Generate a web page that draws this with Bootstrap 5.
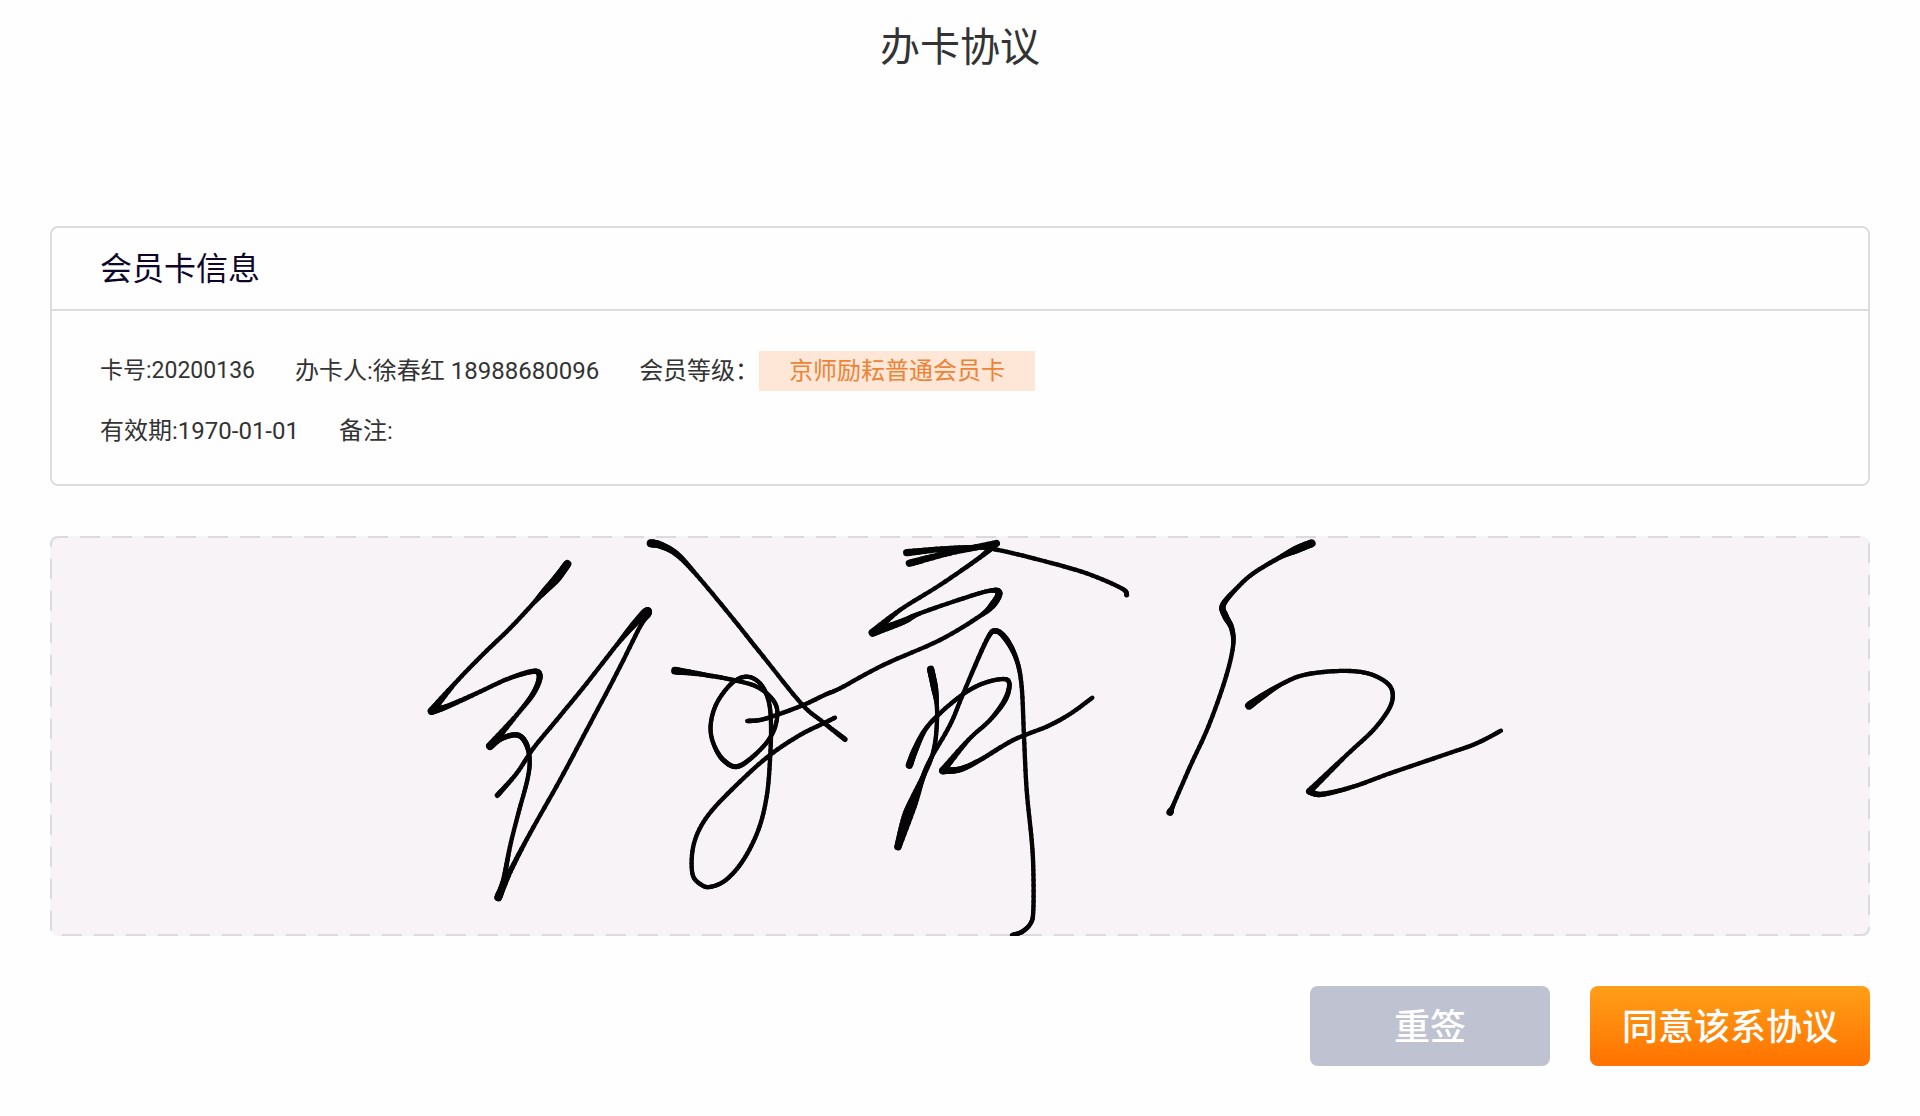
<!DOCTYPE html>
<html lang="zh-CN">
<head>
<meta charset="utf-8">
<meta name="viewport" content="width=device-width, initial-scale=1">
<title>办卡协议</title>
<link href="https://cdn.jsdelivr.net/npm/bootstrap@5.3.0/dist/css/bootstrap.min.css" rel="stylesheet">
<style>
  body { background: #fefefe; color: #333; font-family: Roboto, "Noto Sans CJK SC", sans-serif; font-size: 24px; line-height: 40px; }
  .page-title { font-size: 40px; line-height: 96px; margin-bottom: 130px; }
  .agreement { padding: 0 50px; }
  .info-card { border: 2px solid #ddd; border-radius: 8px; background: #fefefe; color: #333; margin-bottom: 50px; }
  .info-card .card-header { background: none; border-bottom: 2px solid #ddd; padding: 1px 48px 0; }
  .info-card h2 { color: #0d0628; font-size: 32px; line-height: 80px; }
  .info-card .card-body { padding: 40px 48px 33px; }
  .info-line { column-gap: 40px; margin-bottom: 20px; }
  .info-line:last-child { margin-bottom: 0; }
  .card-no { font-size: 23px; }
  .level-tag { background: #fee7d6; color: #ed8336; padding: 0 30px; }
  .sign-pad { height: 400px; margin-bottom: 50px; background: #f7f3f7; border-radius: 8px; }
  .sign-pad svg { width: 100%; height: 100%; display: block; }
  .pad-edge { width: calc(100% - 2px); height: calc(100% - 2px); }
  .sign-actions { gap: 40px; }
  .sign-btn { height: 80px; border: 0; border-radius: 8px; color: #fff; font-size: 36px; font-weight: 500; padding: 4px 0 0; }
  .btn-redo { width: 240px; background: #bfc2d0; }
  .btn-agree { width: 280px; background: linear-gradient(#ff9f18, #ff7200); }
  .btn-redo:hover { background: #b0b4c4; color: #fff; }
  .btn-agree:hover { background: #ff7200; color: #fff; }
</style>
</head>
<body>
<header><h1 class="page-title text-center fw-normal">办卡协议</h1></header>
<main class="agreement">
  <section class="card info-card">
    <div class="card-header"><h2 class="fw-normal m-0">会员卡信息</h2></div>
    <div class="card-body">
      <div class="info-line d-flex flex-wrap">
        <span class="card-no">卡号:20200136</span>
        <span>办卡人:徐春红 18988680096</span>
        <span class="d-flex"><span>会员等级：</span><span class="level-tag">京师励耘普通会员卡</span></span>
      </div>
      <div class="info-line d-flex flex-wrap">
        <span>有效期:1970-01-01</span>
        <span>备注:</span>
      </div>
    </div>
  </section>

  <section class="sign-pad" aria-label="签名">
    <svg role="img" aria-label="手写签名">
      <rect class="pad-edge" x="1" y="1" rx="7" ry="7" fill="none" stroke="#dddadd" stroke-width="2" stroke-dasharray="20 12" stroke-dashoffset="10"/>
      <svg viewBox="0 0 1820 400" width="100%" height="100%"><g id="ink" stroke="#050505" stroke-linecap="round"></g></svg>
    </svg>
  </section>

  <div class="sign-actions d-flex flex-wrap justify-content-end">
    <button type="button" class="btn sign-btn btn-redo">重签</button>
    <button type="button" class="btn sign-btn btn-agree">同意该系协议</button>
  </div>
</main>
<script src="https://cdn.jsdelivr.net/npm/bootstrap@5.3.0/dist/js/bootstrap.bundle.min.js"></script>
<script>
// Pen samples: x, y, width in thirds of a pixel, relative to the origin of each stroke.
// A sample given twice is a sharp corner.
const strokes = [
  {o:[360,-6], p:[472,102,24, 440,145,26, 405,182,20, 370,220,13, 300,295,13, 220,372,13, 135,460,13, 65,543,24, 65,543,24, 110,530,16, 200,490,13, 290,448,13, 370,424,16, 389,440,18, 370,490,16, 320,555,13, 240,648,24, 240,648,24, 275,625,16, 322,615,16, 348,640,16, 359,690,13, 352,750,13, 325,850,13, 300,950,13, 281,1050,16, 265,1102,24, 265,1102,24, 300,1025,16, 360,910,13, 450,750,13, 530,600,13, 620,430,13, 690,290,13, 714,250,22, 706,246,22, 670,285,20, 620,345,13, 530,460,13, 440,570,13, 370,655,13, 320,730,13, 262,796,16]},
  {o:[360,-6], p:[722,40,24, 750,45,22, 800,72,18, 860,135,13, 960,255,13, 1060,380,13, 1175,522,13, 1240,577,13, 1305,628,16]},
  {o:[360,-6], p:[795,422,24, 870,432,15, 970,450,13, 1040,470,13, 1085,505,13, 1102,545,13, 1090,605,13, 1050,660,13, 985,709,15, 940,690,15, 910,640,13, 902,585,13, 920,520,13, 965,460,13, 1010,440,13, 1050,460,13, 1075,510,13, 1083,580,13, 1080,690,13, 1070,800,13, 1045,900,13, 1000,990,13, 950,1048,13, 905,1070,13, 875,1065,13, 847,1030,13, 852,940,13, 895,855,13, 990,755,13, 1080,675,13, 1170,615,13, 1245,578,13, 1275,563,13]},
  {o:[790,-6], p:[200,68,22, 320,56,16, 410,52,13, 475,60,13, 600,90,13, 740,130,13, 845,175,13, 860,195,15]},
  {o:[790,-6], p:[208,100,22, 330,68,18, 470,40,20, 470,40,20, 420,82,14, 300,165,13, 180,240,13, 98,308,24, 98,308,24, 190,274,20, 240,250,13, 370,205,13, 450,182,13, 477,188,20, 460,222,22, 420,258,13, 300,330,13, 130,405,13, 0,475,13, -40,492,13, -110,525,13, -190,555,13, -240,570,13, -278,573,14]},
  {o:[790,-6], p:[272,418,22, 283,470,22, 290,520,13, 291,570,13, 285,640,13, 268,700,13, 222,795,16, 195,860,20, 174,950,22, 174,950,22, 220,830,20, 246,750,16, 270,690,13, 330,585,13, 370,490,13, 440,330,14, 468,303,16, 500,330,18, 530,390,14, 545,470,13, 552,620,13, 560,780,13, 575,930,13, 580,1020,13, 580,1140,13, 572,1180,13, 545,1206,14, 516,1215,13]},
  {o:[790,-6], p:[208,706,22, 225,660,20, 255,600,14, 300,550,13, 370,492,13, 430,460,13, 490,447,13, 508,462,14, 495,510,16, 450,570,13, 385,630,13, 308,722,22, 308,722,22, 360,718,18, 420,690,14, 520,630,13, 620,590,13, 690,552,13, 757,503,13]},
  {o:[1090,-6], p:[515,40,24, 470,58,24, 420,82,14, 340,130,13, 290,175,13, 249,225,18, 256,258,20, 275,295,16, 279,350,13, 255,450,13, 205,590,13, 150,710,13, 100,825,13, 90,847,22]},
  {o:[1090,-6], p:[327,527,24, 365,500,20, 420,465,13, 480,438,13, 550,426,13, 630,423,13, 690,432,13, 740,458,13, 758,490,13, 748,535,13, 700,600,13, 620,675,13, 508,784,20, 508,784,20, 545,793,16, 640,770,13, 750,730,13, 920,672,13, 1010,640,13, 1083,602,13]}
];
const ink = document.getElementById('ink');
const STEPS = 8;
const curve = (a, b, c, d, t) =>
  .5 * (2*b + (c-a)*t + (2*a-5*b+4*c-d)*t*t + (3*b-a-3*c+d)*t*t*t);
for (const {o, p} of strokes) {
  const n = p.length / 3;
  const at = i => { i = Math.max(0, Math.min(n - 1, i)); return p.slice(i*3, i*3+3); };
  let last = at(0);
  for (let i = 0; i < n - 1; i++) {
    const [a, b, c, d] = [at(i-1), at(i), at(i+1), at(i+2)];
    if (b[0] === c[0] && b[1] === c[1]) continue;
    for (let s = 1; s <= STEPS; s++) {
      const t = s / STEPS;
      const q = [curve(a[0],b[0],c[0],d[0],t), curve(a[1],b[1],c[1],d[1],t), b[2] + (c[2]-b[2])*t];
      const seg = document.createElementNS('http://www.w3.org/2000/svg', 'line');
      seg.setAttribute('x1', o[0] + last[0]/3);
      seg.setAttribute('y1', o[1] + last[1]/3);
      seg.setAttribute('x2', o[0] + q[0]/3);
      seg.setAttribute('y2', o[1] + q[1]/3);
      seg.setAttribute('stroke-width', (last[2] + q[2]) / 6);
      ink.appendChild(seg);
      last = q;
    }
  }
}
</script>
</body>
</html>
